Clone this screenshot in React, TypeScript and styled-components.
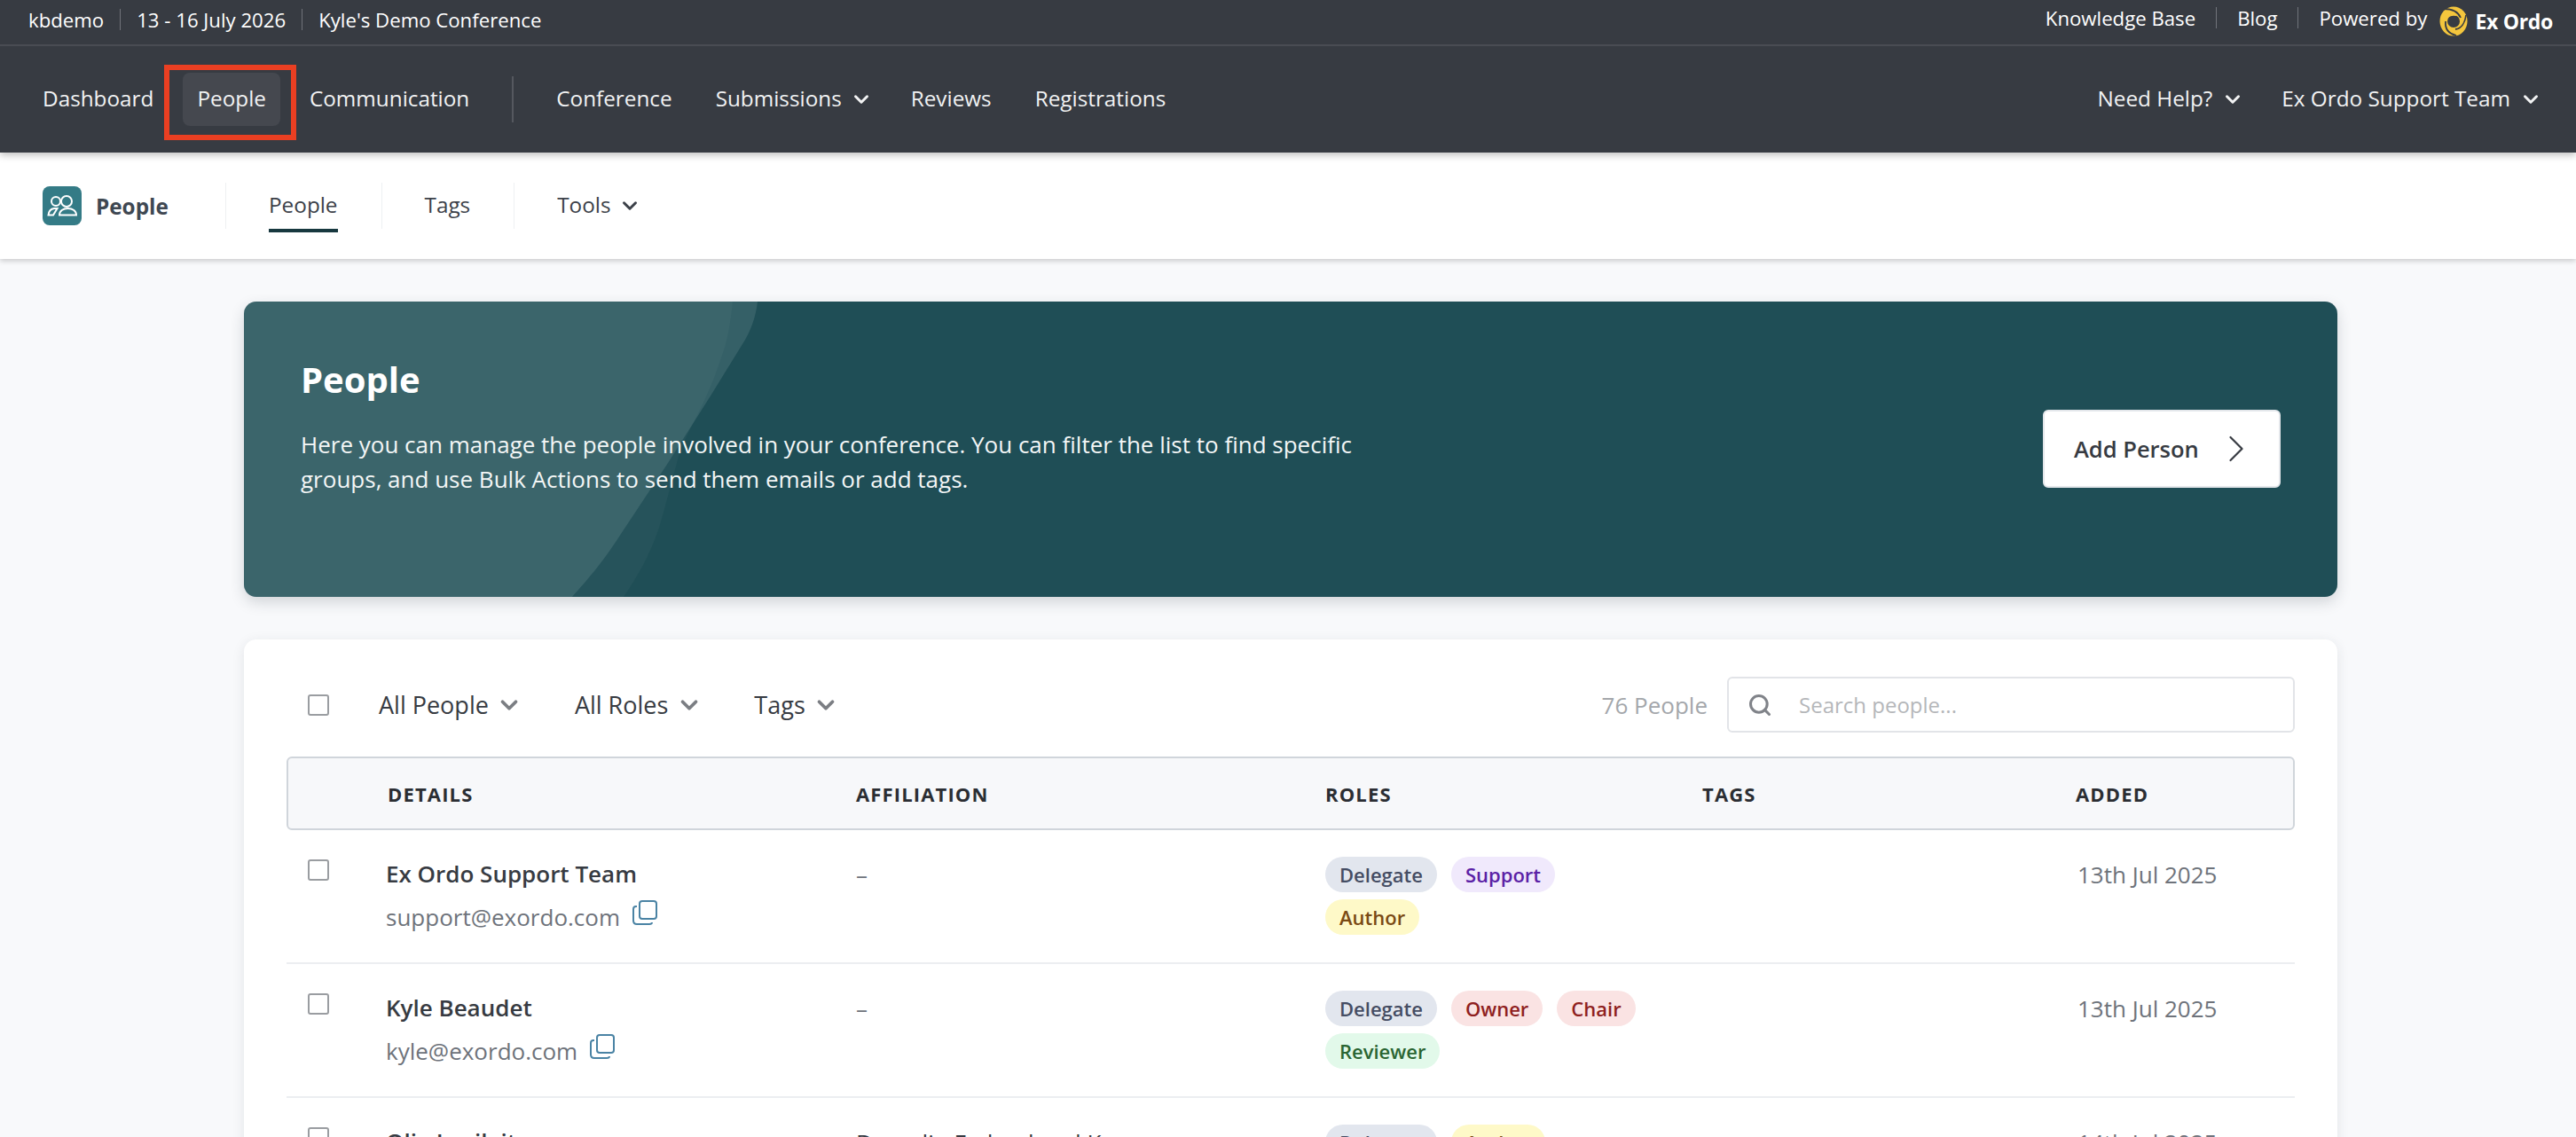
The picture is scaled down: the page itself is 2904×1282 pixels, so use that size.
import React from "react";
import styled, { createGlobalStyle } from "styled-components";
import { ChevronDown, ChevronRight, Search } from "lucide-react";

const GlobalStyle = createGlobalStyle`
  html, body {
    margin: 0;
    padding: 0;
    background: #f8f9fb;
    font-family: "Open Sans", "Liberation Sans", sans-serif;
    overflow: hidden;
  }
  * { box-sizing: border-box; }
`;

const Page = styled.div`
  height: 1282px;
  overflow: hidden;
`;

const Header = styled.header`
  position: relative;
  z-index: 2;
  background: #373b42;
  box-shadow: 0 3px 8px rgba(0, 0, 0, 0.25);
`;

const TopBar = styled.div`
  height: 52px;
  border-bottom: 2px solid #494c53;
  display: flex;
  justify-content: space-between;
  padding: 0 26px 0 32px;
  color: #ffffff;
  font-size: 22.2px;
  font-weight: 500;
`;

const TopGroup = styled.div<{ $up?: boolean }>`
  display: flex;
  align-items: center;
  height: ${(p) => (p.$up ? "40px" : "44px")};
`;

const TopDivider = styled.span<{ $tall?: boolean }>`
  width: 1px;
  height: 24px;
  background: #70737a;
  margin: 0 ${(p) => (p.$tall ? "23px" : "18px")};
`;

const Brand = styled.span`
  display: flex;
  align-items: center;
  gap: 8px;
  margin-left: 14px;
  margin-top: 8px;
  font-size: 23px;
  font-weight: 700;
  letter-spacing: -0.3px;
`;

const NavBar = styled.nav`
  height: 120px;
  display: flex;
  align-items: center;
  justify-content: space-between;
  padding: 0 29px 0 32px;
`;

const NavGroup = styled.div`
  display: flex;
  align-items: center;
  gap: 17px;
`;

const NavItem = styled.a<{ $active?: boolean }>`
  position: relative;
  height: 60px;
  padding: 0 16px 3px;
  display: flex;
  align-items: center;
  gap: 16px;
  border-radius: 8px;
  font-size: 24.3px;
  color: #f1f2f3;
  background: ${(p) => (p.$active ? "#45484f" : "transparent")};
  svg {
    margin: 3px -6.5px 0;
  }
`;

const Highlight = styled.span`
  position: absolute;
  left: -21px;
  top: -9px;
  width: 149px;
  height: 85px;
  border: 6px solid #ea3f22;
`;

const NavDivider = styled.span`
  width: 2px;
  height: 52px;
  background: #55585f;
  margin: 0 15px;
`;

const SubNav = styled.div`
  position: relative;
  z-index: 1;
  height: 120px;
  background: #ffffff;
  box-shadow: 0 2px 6px rgba(0, 0, 0, 0.2);
  display: flex;
  align-items: center;
  padding-left: 48px;
`;

const SubTitle = styled.div`
  display: flex;
  align-items: center;
  gap: 16px;
  width: 206px;
  font-size: 24.3px;
  font-weight: 700;
  color: #3f4852;
`;

const SubIcon = styled.span`
  width: 44px;
  height: 44px;
  border-radius: 8px;
  background: #347b86;
  display: flex;
`;

const SubTab = styled.a`
  position: relative;
  height: 52px;
  padding: 0 49px 3px 48px;
  display: flex;
  align-items: center;
  gap: 15px;
  font-size: 24.3px;
  color: #3c4149;
  border-left: 1px solid #eef0f2;
  svg {
    margin: 3px -6.5px 0;
  }
`;

const TabLine = styled.span`
  position: absolute;
  left: 48px;
  right: 49px;
  bottom: -4px;
  height: 4px;
  background: #17383f;
`;

const Main = styled.main`
  padding: 48px 269px 0 275px;
`;

const Hero = styled.section`
  position: relative;
  height: 333px;
  border-radius: 14px;
  background: #1f4e56;
  box-shadow: 0 6px 16px rgba(40, 50, 60, 0.18);
  overflow: hidden;
  display: flex;
  justify-content: space-between;
  align-items: center;
  padding: 0 64px;
  color: #ffffff;
`;

const HeroWave = styled.svg`
  position: absolute;
  left: 0;
  top: 0;
`;

const HeroText = styled.div`
  position: relative;
  align-self: flex-start;
  padding-top: 60px;
  max-width: 1200px;
`;

const HeroTitle = styled.h1`
  margin: 0 0 27px;
  font-size: 40px;
  line-height: 55px;
  font-weight: 700;
`;

const HeroCopy = styled.p`
  margin: 0;
  font-size: 26px;
  line-height: 38.5px;
  color: #f3f6f6;
`;

const AddButton = styled.button`
  position: relative;
  width: 268px;
  height: 88px;
  margin-top: -1px;
  border: 2px solid #e4e7eb;
  border-radius: 6px;
  background: #ffffff;
  padding: 0 0 0 33px;
  display: flex;
  align-items: center;
  gap: 16px;
  font-family: inherit;
  font-size: 25.5px;
  font-weight: 600;
  color: #373b42;
`;

const Card = styled.section`
  margin-top: 48px;
  background: #ffffff;
  border-radius: 14px 14px 0 0;
  box-shadow: 0 3px 14px rgba(40, 50, 60, 0.1);
  padding: 42px 48px 0;
`;

const Toolbar = styled.div`
  height: 63px;
  display: flex;
  align-items: center;
  padding-left: 24px;
`;

const Checkbox = styled.span`
  display: block;
  width: 24px;
  height: 24px;
  border: 2px solid #9a9da1;
  border-radius: 3px;
  background: #fff;
`;

const Filter = styled.div`
  display: flex;
  align-items: center;
  gap: 16px;
  margin-right: 66px;
  font-size: 27px;
  font-weight: 500;
  color: #373b42;
  svg {
    margin: 0 -7.5px;
  }
  &:first-of-type {
    margin-left: 56px;
  }
`;

const Count = styled.div`
  margin-left: auto;
  margin-right: 22px;
  font-size: 26px;
  color: #a4a7ab;
`;

const SearchBox = styled.div`
  width: 640px;
  height: 63px;
  border: 2px solid #e2e4e8;
  border-radius: 6px;
  display: flex;
  align-items: center;
  gap: 30px;
  padding-left: 21px;
  font-size: 24px;
  color: #b5b7ba;
`;

const HeadRow = styled.div`
  margin-top: 27px;
  height: 83px;
  border: 2px solid #d0d5db;
  border-radius: 6px;
  background: #f7f8fa;
  display: grid;
  grid-template-columns: 112px 528px 529px 425px 421px 1fr;
  align-items: center;
  font-size: 22px;
  font-weight: 700;
  letter-spacing: 1.15px;
  color: #2b2e33;
`;

const Row = styled.div`
  height: 151px;
  padding-top: 30px;
  border-bottom: 2px solid #eceef1;
  display: grid;
  grid-template-columns: 112px 530px 529px 423px 425px 1fr;
  align-items: start;
`;

const CheckCell = styled.div`
  padding: 3px 0 0 24px;
`;

const Name = styled.div`
  margin-top: -1px;
  font-size: 26px;
  line-height: 40px;
  font-weight: 600;
  color: #373b42;
`;

const Email = styled.div`
  margin-top: 9px;
  display: flex;
  align-items: center;
  gap: 14px;
  font-size: 26px;
  line-height: 40px;
  color: #6e737b;
  svg {
    margin-top: -10px;
  }
`;

const Plain = styled.div<{ $muted?: boolean }>`
  font-size: 26px;
  line-height: 40px;
  color: ${(p) => (p.$muted ? "#6e737b" : "#373b42")};
`;

const Badges = styled.div`
  display: flex;
  flex-wrap: wrap;
  gap: 8px 16px;
  width: 360px;
`;

const Badge = styled.span<{ $bg: string; $fg: string }>`
  height: 40px;
  padding: 0 16px;
  border-radius: 20px;
  display: flex;
  align-items: center;
  font-size: 22px;
  font-weight: 600;
  background: ${(p) => p.$bg};
  color: ${(p) => p.$fg};
`;

const roleColors: Record<string, { bg: string; fg: string }> = {
  Delegate: { bg: "#e2e6ee", fg: "#454d63" },
  Support: { bg: "#f0e9fc", fg: "#5b21a6" },
  Author: { bg: "#fef9c8", fg: "#7a4a14" },
  Owner: { bg: "#fae3e3", fg: "#8f1f1f" },
  Chair: { bg: "#fae3e3", fg: "#8f1f1f" },
  Reviewer: { bg: "#e2f9ea", fg: "#2a6532" },
};

const people = [
  {
    name: "Ex Ordo Support Team",
    email: "support@exordo.com",
    affiliation: "–",
    roles: ["Delegate", "Support", "Author"],
    added: "13th Jul 2025",
  },
  {
    name: "Kyle Beaudet",
    email: "kyle@exordo.com",
    affiliation: "–",
    roles: ["Delegate", "Owner", "Chair", "Reviewer"],
    added: "13th Jul 2025",
  },
  {
    name: "Olia Lavilaite",
    email: "olia@exordo.com",
    affiliation: "Dunedin Federal and K",
    roles: ["Delegate", "Author"],
    added: "14th Jul 2025",
  },
];

function BrandMark() {
  return (
    <svg width="32" height="34" viewBox="0 0 32 34">
      <ellipse cx="16" cy="17" rx="15.500" ry="16.500" fill="#f4c63d" />
      <g fill="none" stroke="#373b42" strokeWidth="1.800">
        <path d="M5 3 C13 3 21 6 24 13" />
        <path d="M30 10 C29 18 25 25 18 26" />
        <path d="M19 33 C11 31 6 26 7 17" />
      </g>
      <circle cx="16" cy="17" r="7" fill="#373b42" />
      <path d="M10 13 C12 9 17 8 21 10 L18 11 C15 10.500 12 11 10 13 Z" fill="#f4c63d" />
    </svg>
  );
}

function PeopleGlyph() {
  return (
    <svg width="44" height="44" viewBox="0 0 44 44" fill="none" stroke="#fff" strokeWidth="2">
      <circle cx="15" cy="17" r="5" />
      <circle cx="27" cy="17" r="6" />
      <path d="M6.500 32.500 C7 28 9 25.500 13 25 L16.500 25 L12 32.500 Z" />
      <path d="M19 32.500 C19 28 23 25 28.500 25 C34 25 38 28 38 32.500 Z" />
    </svg>
  );
}

function CopyGlyph() {
  return (
    <svg width="28" height="28" viewBox="0 0 28 28" fill="none" stroke="#4a83a4" strokeWidth="2">
      <rect x="8" y="1" width="19" height="20" rx="3" />
      <path d="M5 7 H4 C2 7 1 8 1 10 V23 C1 25.500 2.500 27 5 27 H19 C21 27 22 26 22 25" />
    </svg>
  );
}

function App() {
  return (
    <Page>
      <GlobalStyle />
      <Header>
        <TopBar>
          <TopGroup>
            kbdemo
            <TopDivider />
            13 - 16 July 2026
            <TopDivider />
            Kyle's Demo Conference
          </TopGroup>
          <TopGroup $up>
            Knowledge Base
            <TopDivider $tall />
            Blog
            <TopDivider $tall />
            Powered by
            <Brand>
              <BrandMark />
              Ex Ordo
            </Brand>
          </TopGroup>
        </TopBar>
        <NavBar>
          <NavGroup>
            <NavItem>Dashboard</NavItem>
            <NavItem $active>
              People
              <Highlight />
            </NavItem>
            <NavItem>Communication</NavItem>
            <NavDivider />
            <NavItem>Conference</NavItem>
            <NavItem>
              Submissions <ChevronDown size={26} strokeWidth={2.8} />
            </NavItem>
            <NavItem>Reviews</NavItem>
            <NavItem>Registrations</NavItem>
          </NavGroup>
          <NavGroup>
            <NavItem>
              Need Help? <ChevronDown size={26} strokeWidth={2.8} />
            </NavItem>
            <NavItem>
              Ex Ordo Support Team <ChevronDown size={26} strokeWidth={2.8} />
            </NavItem>
          </NavGroup>
        </NavBar>
      </Header>
      <SubNav>
        <SubTitle>
          <SubIcon>
            <PeopleGlyph />
          </SubIcon>
          People
        </SubTitle>
        <SubTab>
          People
          <TabLine />
        </SubTab>
        <SubTab>Tags</SubTab>
        <SubTab>
          Tools <ChevronDown size={26} strokeWidth={2.8} />
        </SubTab>
      </SubNav>
      <Main>
        <Hero>
          <HeroWave width="600" height="333" viewBox="0 0 600 333">
            <path
              d="M0 0 H579 C577 18 571 34 562 48 L525 108 L478 182 L425 262 C404 295 386 315 370 333 H0 Z"
              fill="#ffffff"
              fillOpacity="0.1"
            />
            <path
              d="M0 0 H551 C549 20 546 38 542 52 C535 72 530 88 522 105 C512 128 500 148 492 168 C484 195 476 228 468 255 C458 285 444 310 428 333 H0 Z"
              fill="#ffffff"
              fillOpacity="0.03"
            />
          </HeroWave>
          <HeroText>
            <HeroTitle>People</HeroTitle>
            <HeroCopy>
              Here you can manage the people involved in your conference. You can filter the list to find specific
              groups, and use Bulk Actions to send them emails or add tags.
            </HeroCopy>
          </HeroText>
          <AddButton>
            Add Person
            <ChevronRight size={52} strokeWidth={1} />
          </AddButton>
        </Hero>
        <Card>
          <Toolbar>
            <Checkbox />
            <Filter>
              All People <ChevronDown size={30} strokeWidth={3} color="#7b7e83" />
            </Filter>
            <Filter>
              All Roles <ChevronDown size={30} strokeWidth={3} color="#7b7e83" />
            </Filter>
            <Filter>
              Tags <ChevronDown size={30} strokeWidth={3} color="#7b7e83" />
            </Filter>
            <Count>76 People</Count>
            <SearchBox>
              <Search size={28} strokeWidth={2.6} color="#808389" />
              Search people...
            </SearchBox>
          </Toolbar>
          <HeadRow>
            <span />
            <span>DETAILS</span>
            <span>AFFILIATION</span>
            <span>ROLES</span>
            <span>TAGS</span>
            <span>ADDED</span>
          </HeadRow>
          {people.map((person) => (
            <Row key={person.email}>
              <CheckCell>
                <Checkbox />
              </CheckCell>
              <div>
                <Name>{person.name}</Name>
                <Email>
                  {person.email}
                  <CopyGlyph />
                </Email>
              </div>
              <Plain $muted={person.affiliation === "–"}>{person.affiliation}</Plain>
              <Badges>
                {person.roles.map((role) => (
                  <Badge key={role} $bg={roleColors[role].bg} $fg={roleColors[role].fg}>
                    {role}
                  </Badge>
                ))}
              </Badges>
              <span />
              <Plain $muted>{person.added}</Plain>
            </Row>
          ))}
        </Card>
      </Main>
    </Page>
  );
}

export default App;
